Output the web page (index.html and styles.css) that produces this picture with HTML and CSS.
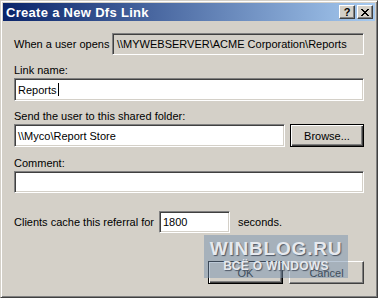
FILE: index.html
```html
<!DOCTYPE html>
<html lang="en">
<head>
    <meta charset="UTF-8">
    <title>Create a New Dfs Link</title>
    <link rel="stylesheet" href="styles.css">
</head>
<body>
    <div class="window">
        <div class="titlebar">
            <span class="title">Create a New Dfs Link</span>
            <div class="caption-buttons">
                <div class="cap-btn help">?</div>
                <div class="cap-btn close">
                    <svg width="8" height="7" viewBox="0 0 8 7">
                        <path d="M0 0h2v1h-2zM6 0h2v1h-2zM1 1h2v1h-2zM5 1h2v1h-2zM2 2h4v1h-4zM3 3h2v1h-2zM2 4h4v1h-4zM1 5h2v1h-2zM5 5h2v1h-2zM0 6h2v1h-2zM6 6h2v1h-2z" fill="#000"/>
                    </svg>
                </div>
            </div>
        </div>

        <div class="content">
            <div class="row opens">
                <span class="opens-label">When a user opens</span>
                <div class="field readonly">\\MYWEBSERVER\ACME Corporation\Reports</div>
            </div>

            <div class="label">Link name:</div>
            <div class="field tall">Reports<span class="caret"></span></div>

            <div class="label">Send the user to this shared folder:</div>
            <div class="row">
                <div class="field tall grow">\\Myco\Report Store</div>
                <div class="btn default browse">Browse...</div>
            </div>

            <div class="label comment">Comment:</div>
            <div class="field"></div>

            <div class="row cache">
                <span class="cache-label">Clients cache this referral for</span>
                <div class="field num">1800</div>
                <span class="seconds">seconds.</span>
            </div>

            <div class="row buttons">
                <div class="btn default">OK</div>
                <div class="btn">Cancel</div>
            </div>
        </div>

        <div class="watermark">
            <div class="wm-big">WINBLOG.RU</div>
            <div class="wm-small">ВСЁ О WINDOWS</div>
        </div>
    </div>
</body>
</html>
```

FILE: styles.css
```css
* {
    margin: 0;
    padding: 0;
    box-sizing: border-box;
}

body {
    width: 378px;
    height: 298px;
    overflow: hidden;
    background: #d4d0c8;
    font-family: "Liberation Sans", Arial, sans-serif;
    font-size: 11px;
    color: #000;
}

.window {
    position: relative;
    width: 378px;
    height: 298px;
    padding: 2px;
    background: #d4d0c8;
    border: 1px solid;
    border-color: #d4d0c8 #404040 #404040 #d4d0c8;
    box-shadow: inset 1px 1px #fff, inset -1px -1px #808080;
}

/* caption */
.titlebar {
    height: 18px;
    display: flex;
    align-items: center;
    justify-content: space-between;
    padding: 0 2px 0 2px;
    background: linear-gradient(90deg, #0a246a 0%, #a6caf0 100%);
}

.title {
    color: #fff;
    font-weight: bold;
    font-size: 13px;
    letter-spacing: 0.3px;
    padding-left: 1px;
}

.caption-buttons {
    display: flex;
    gap: 2px;
}

.cap-btn {
    width: 16px;
    height: 14px;
    display: flex;
    align-items: center;
    justify-content: center;
    background: #d4d0c8;
    border: 1px solid;
    border-color: #fff #404040 #404040 #fff;
    box-shadow: inset -1px -1px #808080;
}

.help {
    font-weight: bold;
    font-size: 11px;
    line-height: 1;
}

/* body */
.content {
    display: flex;
    flex-direction: column;
    padding: 12px 11px 0 11px;
}

.row {
    display: flex;
    align-items: center;
}

.opens-label {
    width: 98px;
}

.label {
    margin-top: 9px;
    margin-bottom: 1px;
    line-height: 13px;
}

.label.comment {
    margin-top: 10px;
}

.field {
    height: 22px;
    display: flex;
    align-items: center;
    padding-left: 3px;
    background: #fff;
    border: 1px solid;
    border-color: #808080 #fff #fff #808080;
    box-shadow: inset 1px 1px #404040, inset -1px -1px #d4d0c8;
    white-space: nowrap;
}

.field.tall {
    height: 23px;
}

.field.readonly {
    flex: 1;
    padding-left: 4px;
    background: #d4d0c8;
}

.grow {
    flex: 1;
}

.caret {
    width: 1px;
    height: 13px;
    margin-left: 1px;
    background: #000;
}

.btn {
    width: 75px;
    height: 23px;
    display: flex;
    align-items: center;
    justify-content: center;
    background: #d4d0c8;
    border: 1px solid;
    border-color: #fff #404040 #404040 #fff;
    box-shadow: inset -1px -1px #808080;
}

.btn.default {
    border-color: #000;
    box-shadow: inset 1px 1px #fff, inset -1px -1px #404040, inset -2px -2px #808080;
}

.browse {
    width: 74px;
    margin-left: 5px;
}

.cache {
    margin-top: 18px;
}

.cache-label {
    width: 145px;
}

.field.num {
    width: 71px;
}

.seconds {
    margin-left: 8px;
}

.buttons {
    margin-top: 28px;
    justify-content: flex-end;
    gap: 6px;
}

/* site watermark over the screenshot */
.watermark {
    position: absolute;
    left: 203px;
    top: 234px;
    width: 144px;
    height: 43px;
    background: rgba(120, 146, 174, 0.5);
    display: flex;
    flex-direction: column;
    align-items: center;
    font-weight: bold;
    color: #e6e9ee;
    text-shadow: 1px 1px 1px #4e5866;
}

.wm-big {
    font-size: 19px;
    line-height: 20px;
    margin-top: 4px;
    letter-spacing: 0.8px;
}

.wm-small {
    font-size: 12px;
    line-height: 12px;
    margin-top: 1px;
    letter-spacing: 0.3px;
}
```
